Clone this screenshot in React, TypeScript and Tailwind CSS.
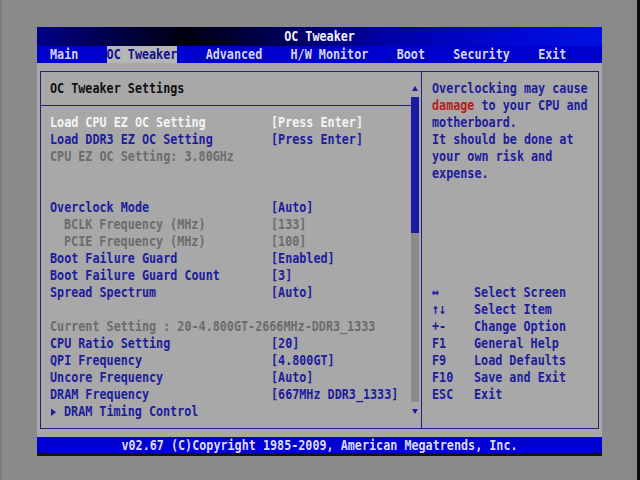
import React from "react";

type Kind = "sel" | "n" | "d";
type RowT = { l: string; v?: string; c: Kind; ind?: boolean; arrow?: boolean } | null;

const rows: RowT[] = [
  { l: "Load CPU EZ OC Setting", v: "[Press Enter]", c: "sel" },
  { l: "Load DDR3 EZ OC Setting", v: "[Press Enter]", c: "n" },
  { l: "CPU EZ OC Setting: 3.80GHz", c: "d" },
  null,
  null,
  { l: "Overclock Mode", v: "[Auto]", c: "n" },
  { l: "BCLK Frequency (MHz)", v: "[133]", c: "d", ind: true },
  { l: "PCIE Frequency (MHz)", v: "[100]", c: "d", ind: true },
  { l: "Boot Failure Guard", v: "[Enabled]", c: "n" },
  { l: "Boot Failure Guard Count", v: "[3]", c: "n" },
  { l: "Spread Spectrum", v: "[Auto]", c: "n" },
  null,
  { l: "Current Setting : 20-4.800GT-2666MHz-DDR3_1333", c: "d" },
  { l: "CPU Ratio Setting", v: "[20]", c: "n" },
  { l: "QPI Frequency", v: "[4.800GT]", c: "n" },
  { l: "Uncore Frequency", v: "[Auto]", c: "n" },
  { l: "DRAM Frequency", v: "[667MHz DDR3_1333]", c: "n" },
  { l: "DRAM Timing Control", c: "n", arrow: true },
];

const colorOf = (c: Kind) =>
  c === "sel" ? "text-[#f4f4f4]" : c === "d" ? "text-[#6c6c6c]" : "text-[#1c1c9c]";

const keys: [string, string][] = [
  ["↔", "Select Screen"],
  ["↑↓", "Select Item"],
  ["+-", "Change Option"],
  ["F1", "General Help"],
  ["F9", "Load Defaults"],
  ["F10", "Save and Exit"],
  ["ESC", "Exit"],
];

const menu = ["Main", "OC Tweaker", "Advanced", "H/W Monitor", "Boot", "Security", "Exit"];

function TriUp() {
  return (
    <svg width="6" height="5" viewBox="0 0 6 5" className="block">
      <polygon points="0,5 3,0 6,5" fill="#1c1c9c" />
    </svg>
  );
}
function TriDown() {
  return (
    <svg width="6" height="5" viewBox="0 0 6 5" className="block">
      <polygon points="0,0 6,0 3,5" fill="#1c1c9c" />
    </svg>
  );
}
function TriRight() {
  return (
    <svg width="5" height="6" viewBox="0 0 5 6" className="block">
      <polygon points="0,0 5,3 0,6" fill="#1c1c9c" />
    </svg>
  );
}

export default function App() {
  return (
    <div className="w-[640px] h-[480px] overflow-hidden bg-[#8a8a8a] flex font-['DejaVu_Sans_Mono',monospace] text-[11.76px] font-bold">
      <div className="w-[2px] bg-[#7a7a7a]" />
      <div className="w-[635px] pl-[35px] pt-[27px]">
        <div className="w-[565px] flex flex-col">
          {/* title */}
          <div className="h-[19px] flex items-center justify-center bg-[linear-gradient(to_right,#000088_0%,#000010_26%,#0000a0_60%,#0008d8_85%,#0010e0_100%)]">
            <span className="text-[#f2f2f2] scale-y-[1.25] leading-[19px]">OC Tweaker</span>
          </div>
          {/* menu */}
          <div className="h-[17px] bg-[#0000cc] flex pl-[13px] gap-[28.3px]">
            {menu.map((m, i) => (
              <div
                key={m}
                className={`h-[17px] leading-[17px] whitespace-pre ${
                  i === 1 ? "bg-[#b6b6b6] text-[#10108a]" : "text-[#d4d4f4]"
                }`}
              >
                <span className="inline-block scale-y-[1.25]">{m}</span>
              </div>
            ))}
          </div>
          {/* body */}
          <div className="h-[374px] bg-[#a8a8a8] pt-[8px] pl-[3px]">
            <div className="w-[559px] h-[358px] border border-[#20207e] flex">
              {/* left panel */}
              <div className="w-[380px] flex">
                <div className="w-[370px] pt-[8px]">
                  <div className="h-[17px] leading-[17px] pl-[9px] text-[#101010] scale-y-[1.25]">
                    OC Tweaker Settings
                  </div>
                  <div className="h-[17px] flex items-center">
                    <div className="h-px w-full bg-[#20207e]" />
                  </div>
                  {rows.map((r, i) =>
                    r === null ? (
                      <div key={i} className="h-[17px]" />
                    ) : (
                      <div
                        key={i}
                        className={`h-[17px] leading-[17px] pl-[9px] flex items-center whitespace-pre scale-y-[1.25] ${colorOf(r.c)}`}
                      >
                        {r.arrow ? (
                          <>
                            <span className="w-[14px] flex pl-[1px]">
                              <TriRight />
                            </span>
                            <span>{r.l}</span>
                          </>
                        ) : r.v ? (
                          <>
                            <span className={`w-[221px] shrink-0 ${r.ind ? "pl-[14px]" : ""}`}>{r.l}</span>
                            <span>{r.v}</span>
                          </>
                        ) : (
                          <span>{r.l}</span>
                        )}
                      </div>
                    )
                  )}
                </div>
                {/* scrollbar */}
                <div className="w-[8px] flex flex-col items-center">
                  <div className="h-[25px] pt-[14px]">
                    <TriUp />
                  </div>
                  <div className="w-[8px] h-[136px] bg-[#1a1aa2]" />
                  <div className="w-[8px] h-[169px] bg-[#8a8a8a]" />
                  <div className="pt-[7px]">
                    <TriDown />
                  </div>
                </div>
                <div className="w-[2px]" />
              </div>
              {/* right panel */}
              <div className="flex-1 border-l border-[#20207e] pl-[10px] pt-[8px] text-[#1c1c9c]">
                {[
                  <>Overclocking may cause</>,
                  <>
                    <span className="text-[#b81c1c]">damage</span> to your CPU and
                  </>,
                  <>motherboard.</>,
                  <>It should be done at</>,
                  <>your own risk and</>,
                  <>expense.</>,
                ].map((t, i) => (
                  <div key={i} className="h-[17px] leading-[17px] whitespace-pre scale-y-[1.25]">
                    {t}
                  </div>
                ))}
                <div className="h-[102px]" />
                {keys.map(([k, d]) => (
                  <div key={k} className="h-[17px] leading-[17px] whitespace-pre flex scale-y-[1.25]">
                    <span className="w-[42px] shrink-0">{k}</span>
                    <span>{d}</span>
                  </div>
                ))}
              </div>
            </div>
          </div>
          {/* footer */}
          <div className="h-[16px] bg-[#0000d0] flex items-center justify-center">
            <span className="text-[#dcdcf4] leading-[16px] whitespace-pre scale-y-[1.25]">
              v02.67 (C)Copyright 1985-2009, American Megatrends, Inc.
            </span>
          </div>
          <div className="h-[3px] bg-[#141414]" />
        </div>
      </div>
      <div className="w-[3px] bg-[#0c0c0c]" />
    </div>
  );
}
